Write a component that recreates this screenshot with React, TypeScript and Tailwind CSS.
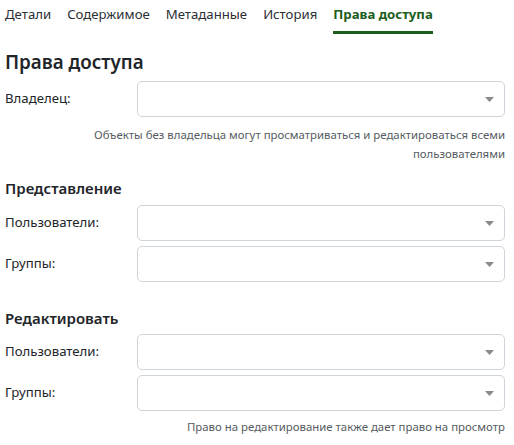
import React from "react";

const font = { fontFamily: '"Segoe UI", "Noto Sans", "Open Sans", sans-serif' };

function Select() {
  return (
    <div className="flex-1 h-[36px] rounded-[5px] border border-[#ced4da] bg-white flex items-center justify-end pr-[10px]">
      <svg width="9" height="5" viewBox="0 0 9 5">
        <path d="M0 0 L9 0 L4.5 5 Z" fill="#8a8a8a" />
      </svg>
    </div>
  );
}

function Row({ label }: { label: string }) {
  return (
    <div className="flex items-center">
      <div className="w-[132px] text-[13.2px] text-[#212529]">{label}</div>
      <Select />
    </div>
  );
}

export default function App() {
  const tabs = ["Детали", "Содержимое", "Метаданные", "История", "Права доступа"];
  return (
    <div className="w-[514px] h-[445px] bg-white pl-[5px] pr-[9px]" style={font}>
      <div className="flex gap-[16px] h-[34px]">
        {tabs.map((t, i) => (
          <div
            key={t}
            className={
              i === 4
                ? "pt-[4px] text-[13.2px] leading-[20px] font-bold text-[#1b5e20] border-b-[3px] border-[#1b5e20] h-[34px]"
                : "pt-[4px] text-[13.2px] leading-[20px] text-[#2b2f33]"
            }
          >
            {t}
          </div>
        ))}
      </div>
      <h1 className="mt-[14px] text-[18.8px] leading-[28px] font-semibold text-[#212529]">Права доступа</h1>
      <div className="mt-[5px]">
        <Row label="Владелец:" />
      </div>
      <p className="mt-[8px] text-right text-[11.4px] leading-[19px] text-[#555b61]">
        Объекты без владельца могут просматриваться и редактироваться всеми
        <br />
        пользователями
      </p>
      <h2 className="mt-[14px] text-[15px] leading-[22px] font-semibold text-[#212529]">Представление</h2>
      <div className="mt-[6px] flex flex-col gap-[5px]">
        <Row label="Пользователи:" />
        <Row label="Группы:" />
      </div>
      <h2 className="mt-[25px] text-[15px] leading-[22px] font-semibold text-[#212529]">Редактировать</h2>
      <div className="mt-[5px] flex flex-col gap-[5px]">
        <Row label="Пользователи:" />
        <Row label="Группы:" />
      </div>
      <p className="mt-[6px] text-right text-[11.4px] leading-[19px] text-[#555b61]">
        Право на редактирование также дает право на просмотр
      </p>
    </div>
  );
}
